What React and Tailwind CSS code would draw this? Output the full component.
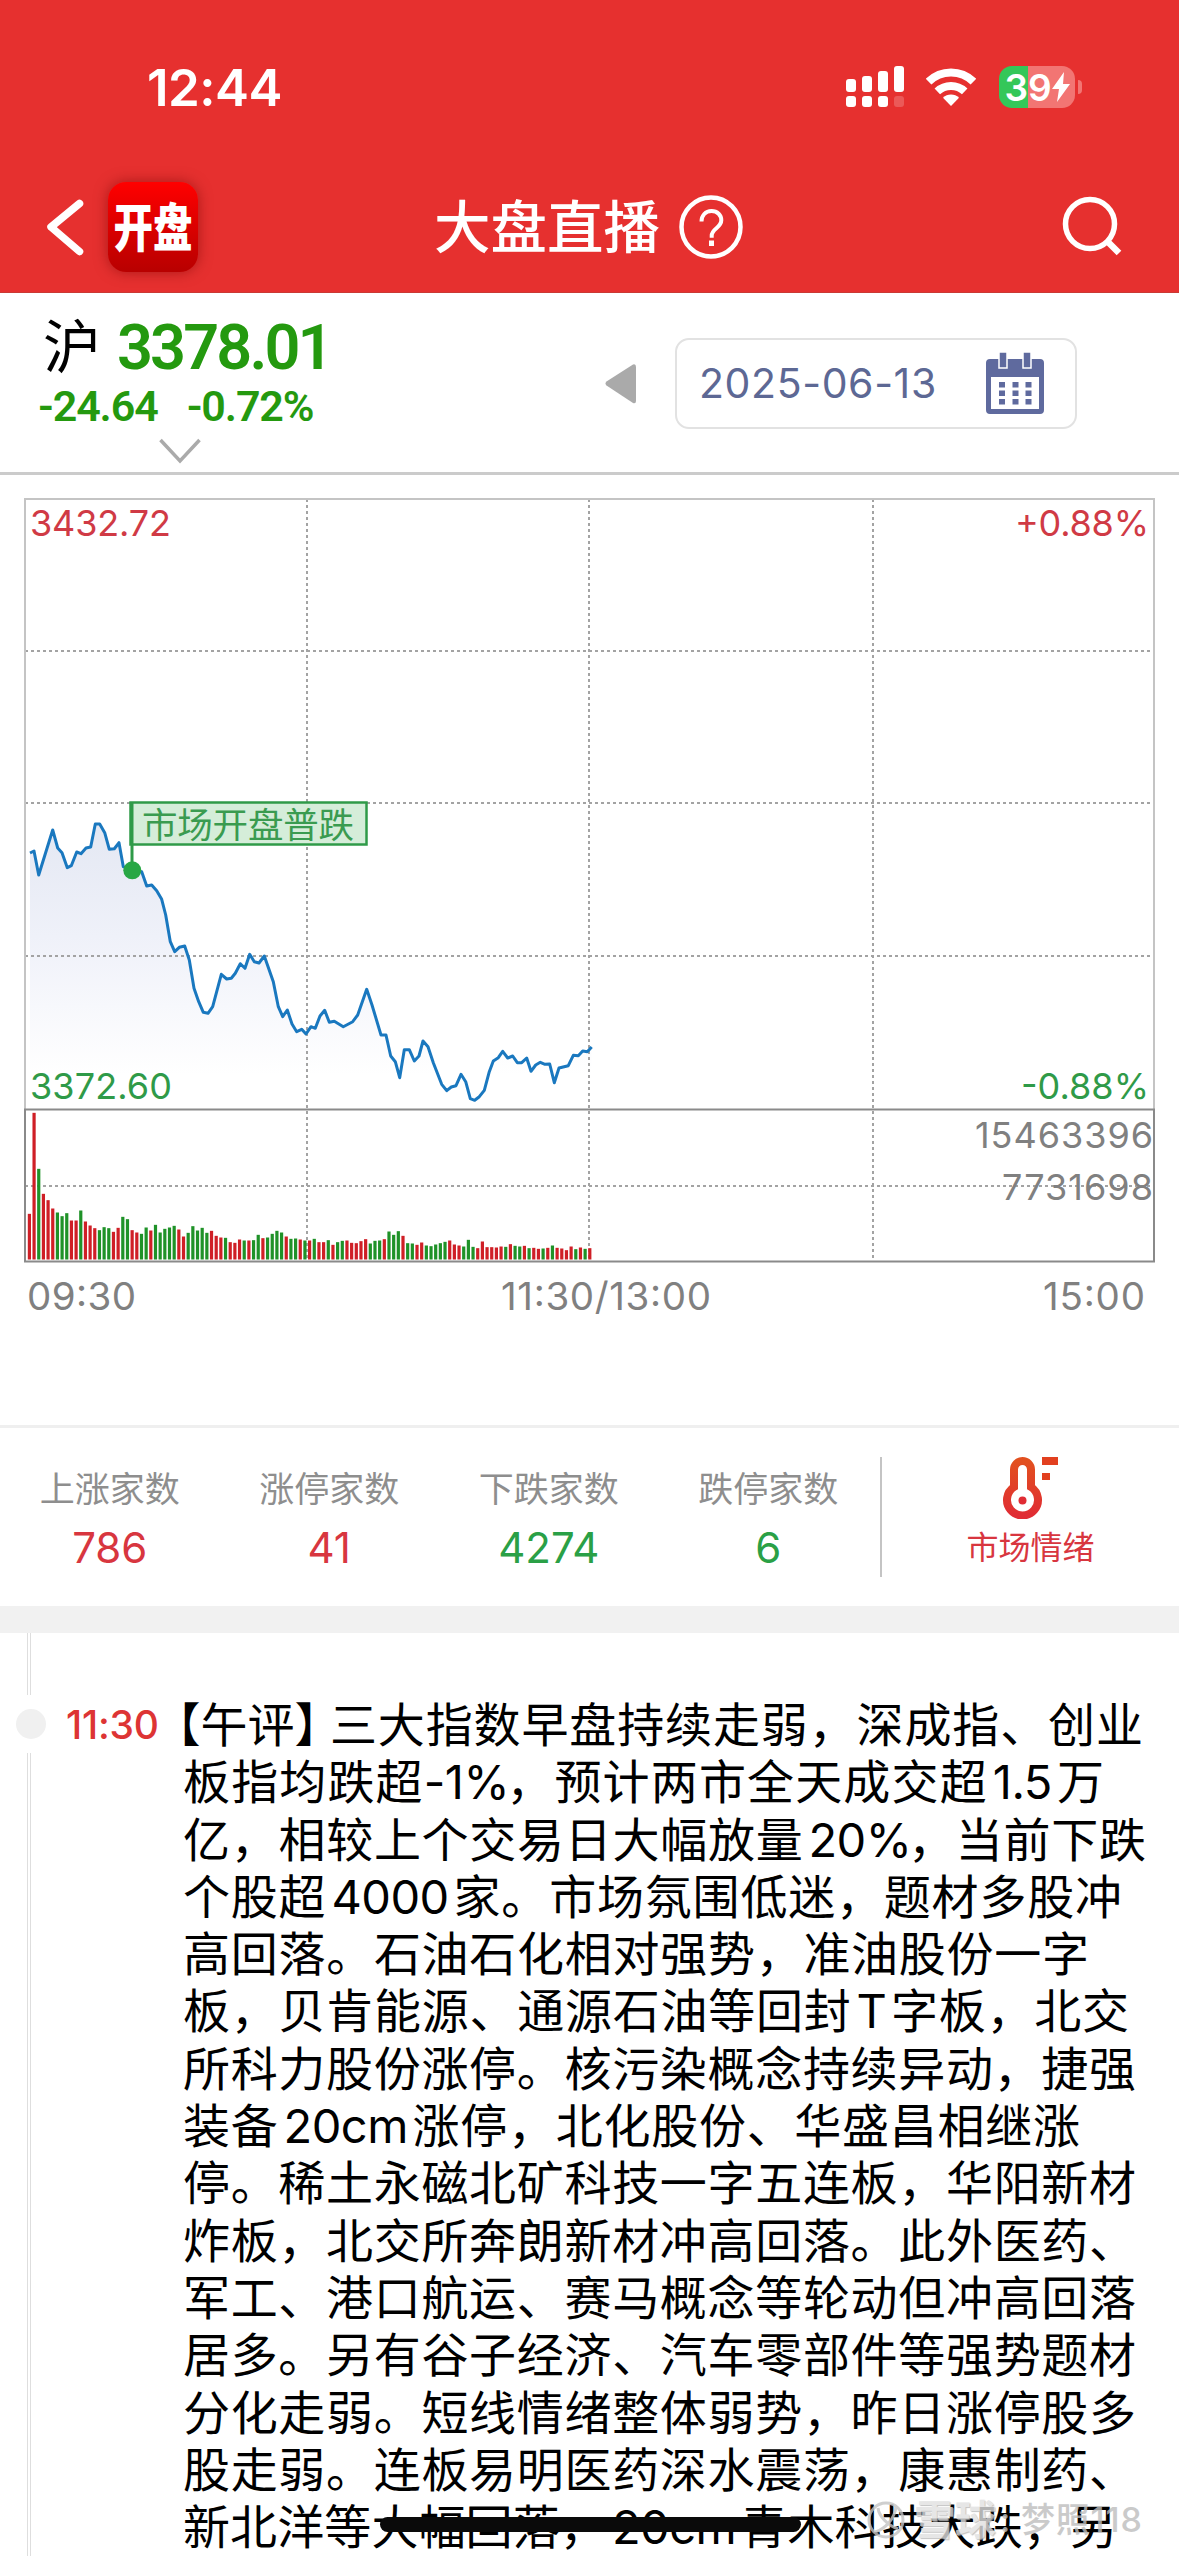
import { Fragment } from "react";

const PRICE_POINTS = [
  [30, 853], [34, 851], [38.7, 875], [52.7, 830], [57.7, 848], [62, 852.7], [67.3, 867.7], [71.3, 865.7],
  [76.7, 852], [81, 853.7], [86, 848], [90.7, 847], [95.3, 824], [99.7, 824], [104.7, 832.7], [109.3, 849.3],
  [114.3, 848.7], [119, 842.7], [123.3, 866.7], [132.3, 870], [141.7, 871.7], [146.7, 886], [151.7, 885],
  [156.7, 890.7], [161.7, 899.3], [165.7, 915], [170.3, 941.7], [174.7, 951.7], [179.3, 947.3], [184.7, 946],
  [189.3, 960], [194, 988.3], [198.7, 1001.7], [203.3, 1012.3], [208, 1013.3], [212.7, 1006.7], [221.3, 974.3],
  [226.7, 979], [231.3, 978.3], [235.3, 973.3], [240.3, 963.7], [245, 968.3], [249.7, 954.3], [254.3, 961.7],
  [259, 963], [264.3, 956], [273.3, 981.7], [278.3, 1006.7], [282.7, 1016.7], [287.3, 1010], [292, 1024],
  [296.7, 1031.7], [301.7, 1029.3], [306, 1034], [311, 1026.7], [315.3, 1028.3], [320, 1016], [324.7, 1010.3],
  [329.3, 1022.3], [334.3, 1021.3], [343.3, 1026.7], [352.7, 1021.7], [357.7, 1015], [366.7, 989.3], [372, 1005],
  [381, 1035], [386, 1035], [390.7, 1056], [395.3, 1061.7], [399.7, 1077.7], [404.3, 1049.7], [409.3, 1049.7],
  [414.3, 1061], [419, 1056], [423, 1041], [428, 1046.7], [433.3, 1062.7], [441.7, 1084.3], [446.7, 1090.7],
  [451.3, 1087], [456, 1085.7], [461, 1074.3], [465.7, 1081.7], [470.3, 1098.7], [474.7, 1100.3], [479.3, 1096.7],
  [484.3, 1090.3], [489.3, 1071.7], [493.3, 1061], [498.3, 1057.7], [502.7, 1051.3], [507.7, 1058], [512.7, 1056],
  [517.3, 1062.7], [521.7, 1062.7], [526.7, 1058], [531, 1071.3], [535.7, 1065], [540.3, 1062.3], [545, 1064.3],
  [549.7, 1064], [554.3, 1082.7], [559, 1068], [568.3, 1065.7], [573.3, 1055.3], [578.3, 1055.7], [582.7, 1051],
  [587.3, 1051.7], [591.7, 1047],
];

// r = up minute, g = down minute, number = volume height in thirds of a pixel
const VOLUMES =
  "r137 r440 g272 r197 r178 r153 g141 g130 g139 r117 r117 g147 r114 r102 r94 g88 g97 g94 r83 r95 g128 g121 r88 r81 g77 g96 r87 g104 g81 g92 g96 g101 r90 r69 g80 g100 g87 g95 g80 r86 r71 r66 g65 r52 r50 r60 g57 r57 g58 g74 r64 g66 g77 g86 g81 r69 g62 g63 r60 g57 r57 g62 r52 r52 g58 r44 g52 g56 r57 r50 r49 r55 r61 g48 g56 g57 r61 g84 g74 g85 r71 g49 g48 r44 r51 g42 g40 g45 g49 g53 r57 r45 r42 g39 g59 g38 r34 r54 r37 r37 r36 r39 g38 r46 g41 g39 r41 g34 r35 r32 g33 r35 g42 r35 r33 r28 r39 g31 r36 g32 r34"
    .split(" ")
    .map((v) => ({ up: v[0] === "r", height: Number(v.slice(1)) / 3 }));

const STATS = [
  { label: "上涨家数", value: "786", color: "text-[#d8363f]" },
  { label: "涨停家数", value: "41", color: "text-[#d8363f]" },
  { label: "下跌家数", value: "4274", color: "text-[#2aa046]" },
  { label: "跌停家数", value: "6", color: "text-[#2aa046]" },
];

const NEWS_LINES = [
  { text: "三大指数早盘持续走弱，深成指、创业", width: "w-[813px]" },
  { text: "板指均跌超-1%，预计两市全天成交超1.5万", width: "w-[921px]" },
  { text: "亿，相较上个交易日大幅放量20%，当前下跌", width: "w-[963px]" },
  { text: "个股超4000家。市场氛围低迷，题材多股冲", width: "w-[939px]" },
  { text: "高回落。石油石化相对强势，准油股份一字", width: "w-[906px]" },
  { text: "板，贝肯能源、通源石油等回封T字板，北交", width: "w-[946px]" },
  { text: "所科力股份涨停。核污染概念持续异动，捷强", width: "w-[953px]" },
  { text: "装备20cm涨停，北化股份、华盛昌相继涨", width: "w-[897px]" },
  { text: "停。稀土永磁北矿科技一字五连板，华阳新材", width: "w-[953px]" },
  { text: "炸板，北交所奔朗新材冲高回落。此外医药、", width: "w-[953px]" },
  { text: "军工、港口航运、赛马概念等轮动但冲高回落", width: "w-[953px]" },
  { text: "居多。另有谷子经济、汽车零部件等强势题材", width: "w-[953px]" },
  { text: "分化走弱。短线情绪整体弱势，昨日涨停股多", width: "w-[953px]" },
  { text: "股走弱。连板易明医药深水震荡，康惠制药、", width: "w-[953px]" },
  { text: "新北洋等大幅回落，20cm青木科技大跌，另", width: "w-[934px]" },
];

function StatusBar() {
  return (
    <div className="flex h-[174px] items-start justify-between pl-[147px] pr-[97px] pt-[57px]">
      <span className="text-[51px] font-semibold leading-[62px] tracking-[-0.5px]">12:44</span>
      <div className="flex items-center pt-[9px]">
        <svg width="60" height="42" viewBox="0 0 60 42" fill="#fff">
          <rect x="0" y="13" width="10" height="13" rx="3" />
          <rect x="16" y="10" width="10" height="16" rx="3" />
          <rect x="32" y="5" width="10" height="21" rx="3" />
          <rect x="48" y="0" width="10" height="26" rx="3" />
          <rect x="0" y="30" width="10" height="11" rx="3" />
          <rect x="16" y="30" width="10" height="11" rx="3" />
          <rect x="32" y="30" width="10" height="11" rx="3" />
          <rect x="48" y="30" width="10" height="11" rx="3" opacity="0.2" />
        </svg>
        <svg className="ml-[20px]" width="50" height="40" viewBox="0 0 50 40" fill="none" stroke="#fff" strokeWidth="8">
          <path d="M2.6 14.6a32 32 0 0 1 44.8 0" />
          <path d="M11.3 24.4a20 20 0 0 1 27.4 0" />
          <path d="M25 39l-8-8.3a11.5 11.5 0 0 1 16 0z" fill="#fff" stroke="none" />
        </svg>
        <div className="ml-[23px] flex h-[42px] w-[76px] items-center justify-center rounded-[13px] bg-[linear-gradient(90deg,#34c759_29px,#f27573_29px)]">
          <span className="text-[37px] font-semibold leading-none">39</span>
          <svg width="18" height="30" viewBox="0 0 18 30" fill="#fff">
            <path d="M12 0L0 17h7L5 30 18 12h-7z" />
          </svg>
        </div>
        <div className="ml-[3px] h-[14px] w-[4px] rounded-r-full bg-[#f27573]" />
      </div>
    </div>
  );
}

function NavBar() {
  return (
    <div className="flex h-[118px] items-center pl-[46px] pr-[56px] pb-[12px]">
      <svg width="40" height="60" viewBox="0 0 40 60" fill="none" stroke="#fff" strokeWidth="7.5" strokeLinecap="round" strokeLinejoin="round">
        <path d="M33.500 6.500L5 30l28.500 24.500" />
      </svg>
      <div className="ml-[22px] flex h-[90px] w-[90px] items-center justify-center rounded-[18px] bg-linear-to-b from-[#ff0000] to-[#b80000] shadow-[0_0_14px_rgba(110,0,0,0.5)]">
        <span className="scale-x-76 whitespace-nowrap pt-[3px] text-[52px] font-black leading-none">开盘</span>
      </div>
      <h1 className="ml-[236px] pt-[3px] text-[56.5px] font-medium leading-none">大盘直播</h1>
      <svg className="ml-[19px]" width="64" height="64" viewBox="0 0 64 64" fill="none" stroke="#fff">
        <circle cx="32" cy="32" r="29.500" strokeWidth="4.500" />
        <path d="M22.500 26.500c0-6 4-10.500 10-10.500s9.800 4.200 9.800 9.300c0 7.700-9.600 8.200-9.600 15.500v2" strokeWidth="4" />
        <path d="M32.500 45.500v5.500" strokeWidth="5" />
      </svg>
      <svg className="ml-auto" width="62" height="62" viewBox="0 0 62 62" fill="none" stroke="#fff">
        <circle cx="29" cy="28" r="24.500" strokeWidth="5.500" />
        <path d="M46 45l12 12" strokeWidth="6.500" />
      </svg>
    </div>
  );
}

function IndexHeader() {
  return (
    <div className="flex h-[182px] border-b-[3px] border-[#cbcbcb]">
      <div className="w-[600px] pl-[38px] pt-[20px] text-[#24990f]">
        <div className="flex h-[68px] items-center">
          <span className="pl-[5px] text-[58px] leading-none text-black">沪</span>
          <span className="ml-[16px] font-[Roboto] text-[63px] font-semibold leading-none tracking-[-2.9px]">3378.01</span>
        </div>
        <div className="flex h-[50px] items-center gap-[29px] font-[Roboto] text-[43px] font-semibold leading-none tracking-[-1.1px]">
          <span>-24.64</span>
          <span>-0.72%</span>
        </div>
        <svg className="ml-[121px] mt-[6px]" width="42" height="28" viewBox="0 0 42 28" fill="none" stroke="#aaa" strokeWidth="3.500">
          <path d="M1.500 3L21 24 40.500 3" />
        </svg>
      </div>
      <div className="flex items-start pt-[45px]">
        <svg className="ml-[5px] mt-[25px]" width="32" height="42" viewBox="0 0 32 42" fill="#aaa">
          <path d="M28 1.500L1.500 18.500q-2 2 0 4L28 40q3 1 3-2V4q0-3.500-3-2.500z" />
        </svg>
        <div className="ml-[38px] flex h-[91px] w-[402px] items-center justify-between rounded-[14px] border-2 border-[#e2e2e2] pl-[22px] pr-[30px]">
          <span className="text-[41px] leading-none tracking-[0.6px] text-[#5d6894]">2025-06-13</span>
          <svg className="-mt-[2px]" width="60" height="62" viewBox="0 0 60 62" fill="#5f6a9e">
            <path fillRule="evenodd" d="M5 7h50q4 0 4 4v47q0 4-4 4H5q-4 0-4-4V11q0-4 4-4zM6 25v32h48V25z" />
            <path d="M14 0h8v16h-8zM38 0h8v16h-8z" stroke="#fff" strokeWidth="1.500" />
            {[30, 38.5, 47].map((y) => (
              <path key={y} d={`M14 ${y}h6v5.500h-6zM27.500 ${y}h6v5.500h-6zM40.500 ${y}h6v5.500h-6z`} />
            ))}
          </svg>
        </div>
      </div>
    </div>
  );
}

function MarketChart() {
  const line = PRICE_POINTS.map((p) => p.join(",")).join(" ");
  const grid = { stroke: "#a3a3a3", strokeWidth: 2, strokeDasharray: "3 3" };

  return (
    <svg className="block font-[Inter]" width="1179" height="950" viewBox="0 475 1179 950">
      <defs>
        <linearGradient id="area" gradientUnits="userSpaceOnUse" x1="0" y1="824" x2="0" y2="1075">
          <stop offset="0" stopColor="#e4e8f3" />
          <stop offset="0.45" stopColor="#eff1f9" />
          <stop offset="1" stopColor="#fff" />
        </linearGradient>
      </defs>
      <polygon points={`30,1108 ${line} 591.7,1108`} fill="url(#area)" />

      {[307, 589, 873].map((x) => (
        <line key={x} x1={x} x2={x} y1="499" y2="1261" {...grid} />
      ))}
      {[651, 803, 956, 1186].map((y) => (
        <line key={y} x1="25" x2="1154" y1={y} y2={y} {...grid} />
      ))}
      <path d="M25 1109V499H1154V1109" fill="none" stroke="#c4c4c4" strokeWidth="2" />
      <rect x="25" y="1109.500" width="1129" height="152" fill="none" stroke="#8a8a8a" strokeWidth="2" />

      {VOLUMES.map((bar, i) => (
        <rect
          key={i}
          x={27.8 + i * 4.67}
          y={1259.5 - bar.height}
          width="3.2"
          height={bar.height}
          fill={bar.up ? "#cf1f26" : "#1f9228"}
        />
      ))}

      <polyline points={line} fill="none" stroke="#1a78bf" strokeWidth="3" strokeLinejoin="round" />

      <rect x="130.500" y="802.500" width="236" height="42" fill="#d5edd9" stroke="#2f9a48" strokeWidth="2.500" />
      <line x1="132" x2="132" y1="803" y2="870" stroke="#2f9a48" strokeWidth="3" />
      <circle cx="132.300" cy="870.300" r="9" fill="#28a745" />
      <text x="142" y="838" fontSize="35.500" fill="#3a9b50" textLength="212" className="font-['Noto_Sans_CJK_SC']">
        市场开盘普跌
      </text>

      <g fontSize="36">
        <text x="30" y="536" textLength="141" fill="#d03a45">3432.72</text>
        <text x="30" y="1099" textLength="142" fill="#2f9a48">3372.60</text>
        <text x="1015" y="536" textLength="134" fill="#d03a45">+0.88%</text>
        <text x="1021" y="1099" textLength="128" fill="#2f9a48">-0.88%</text>
      </g>
      <g fontSize="36" fill="#808080">
        <text x="975" y="1147.500" textLength="178">15463396</text>
        <text x="1002" y="1199.500" textLength="151">7731698</text>
      </g>
      <g fontSize="38.500" fill="#808080">
        <text x="27" y="1310" textLength="109">09:30</text>
        <text x="501" y="1310" textLength="210">11:30/13:00</text>
        <text x="1043" y="1310" textLength="102">15:00</text>
      </g>
    </svg>
  );
}

function MarketStats() {
  return (
    <div className="flex h-[181px] items-center border-t-[3px] border-[#efefef]">
      <div className="flex pr-[2px] pt-[3px]">
        {STATS.map(({ label, value, color }) => (
          <div key={label} className="flex w-[219.500px] flex-col items-center gap-[15px]">
            <span className="text-[35px] leading-[44px] text-[#8e8e8e]">{label}</span>
            <span className={`text-[42px] leading-[44px] ${color}`}>{value}</span>
          </div>
        ))}
      </div>
      <div className="h-[120px] w-[2px] bg-[#c4c4c4]" />
      <div className="flex flex-1 flex-col items-center text-[#d8363f]">
        <svg className="-mt-[7px]" width="58" height="62" viewBox="0 0 58 62" fill="none">
          <defs>
            <linearGradient id="thermo" x1="0" y1="0" x2="0" y2="1">
              <stop offset="0" stopColor="#e2501f" />
              <stop offset="1" stopColor="#e02c34" />
            </linearGradient>
          </defs>
          <path d="M12 30V12.500a8.500 8.500 0 0 1 17 0V30a15.500 15.500 0 1 1-17 0z" stroke="url(#thermo)" strokeWidth="8" />
          <circle cx="20.500" cy="43.500" r="4" fill="#e02c34" />
          <path d="M40 0h16v8H40zM40 16h8v7h-8z" fill="#e2401f" />
        </svg>
        <span className="mt-[7px] text-[32px] leading-[44px]">市场情绪</span>
      </div>
    </div>
  );
}

// latin and digit runs get a little air on both sides, but not next to - or %
function NewsText({ text }) {
  return text.split(/([A-Za-z0-9.%-]+)/).map((part, i) => {
    if (i % 2 === 0) return <Fragment key={i}>{part}</Fragment>;
    const left = part.startsWith("-") ? "ml-0" : "ml-[5px]";
    const right = part.endsWith("%") ? "-mr-[4px]" : "mr-[4px]";
    return (
      <span key={i} className={`${left} ${right} tracking-[-0.5px]`}>{part}</span>
    );
  });
}

function NewsFeed() {
  return (
    <div className="flex h-[923px] overflow-hidden">
      <div className="flex w-[66px] flex-col pl-[16px]">
        <div className="ml-[11px] h-[62px] w-[4px] border-x border-[#dedede]" />
        <div className="my-[14px] size-[30px] shrink-0 rounded-full bg-[#f0f0f0]" />
        <div className="ml-[11px] w-[4px] flex-1 border-x border-[#dedede]" />
      </div>
      <time className="w-[118px] pt-[68px] text-[39px] font-medium leading-[48px] tracking-[-0.2px] text-[#dd3434]">11:30</time>
      <article className="-ml-px pt-[63px] text-[47px] leading-[57.300px] text-black">
        {NEWS_LINES.map(({ text, width }, i) => (
          <p key={text} className={`flex whitespace-nowrap ${i === 0 ? "-ml-[6px]" : ""}`}>
            {i === 0 && (
              <span className="mr-[9px] w-[144px] [font-feature-settings:'halt']">【午评】</span>
            )}
            <span className={`${width} [text-align-last:justify] [text-spacing-trim:space-all]`}>
              <NewsText text={text} />
            </span>
          </p>
        ))}
      </article>
    </div>
  );
}

function Watermark() {
  return (
    <div className="absolute left-[866px] top-[2498px] flex items-center opacity-80">
      <svg width="40" height="44" viewBox="0 0 40 44" fill="none" stroke="#c4c4c4" strokeWidth="3">
        <circle cx="20" cy="22" r="17" />
        <path d="M9 34c10-3 20-13 21-26M12 10c1 8 9 17 20 21" />
      </svg>
      <span className="ml-[8px] text-[41px] font-bold leading-[44px] text-[#e0e0e0] [text-shadow:1px_1px_1px_#b5b5b5]">雪球</span>
      <span className="ml-[4px] text-[34px] font-medium leading-[44px] tracking-[0.8px] text-[#bdbdbd]">: 梦照118</span>
    </div>
  );
}

export default function App() {
  return (
    <div className="relative h-[2556px] w-[1179px] overflow-hidden bg-white font-[Inter,'Noto_Sans_CJK_SC',sans-serif]">
      <header className="h-[293px] border-b border-[#c93a35] bg-[#e6302f] text-white">
        <StatusBar />
        <NavBar />
      </header>
      <IndexHeader />
      <MarketChart />
      <MarketStats />
      <div className="h-[27px] bg-[#f1f1f1]" />
      <NewsFeed />
      <div className="absolute left-[380px] top-[2517px] h-[15px] w-[421px] rounded-full bg-[#0a0a0a]" />
      <Watermark />
    </div>
  );
}
